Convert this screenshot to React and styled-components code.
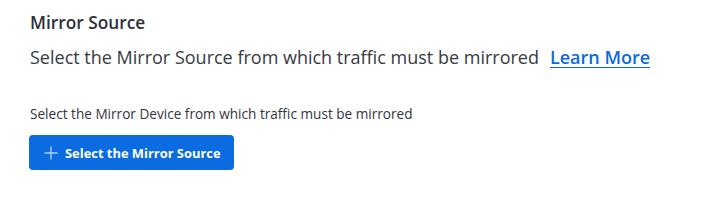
import React from "react";
import styled, { createGlobalStyle } from "styled-components";

const GlobalStyle = createGlobalStyle`
  body {
    margin: 0;
    background: #ffffff;
    font-family: "Open Sans", Lato, sans-serif;
  }
`;

const Section = styled.section`
  padding: 12px 30px 0;
`;

const Title = styled.h2`
  margin: 0;
  font-size: 17.3px;
  font-weight: 600;
  line-height: 22px;
  color: #2c2f38;
`;

const Lead = styled.p`
  margin: 11px 0 0;
  font-size: 18px;
  line-height: 24px;
  color: #373a42;
  display: flex;
  gap: 11px;
  align-items: baseline;
`;

const Link = styled.a`
  color: #0b6be0;
  font-weight: 600;
  text-decoration: underline;
  text-underline-offset: 3px;
  cursor: pointer;
`;

const Hint = styled.p`
  margin: 36px 0 0;
  font-size: 13.6px;
  line-height: 18px;
  color: #33363d;
`;

const Button = styled.button`
  margin-top: 12px;
  margin-left: -1px;
  display: flex;
  align-items: center;
  gap: 7px;
  height: 35px;
  padding: 0 13px 0 15px;
  border: none;
  border-radius: 4px;
  background: #0b6be0;
  color: #ffffff;
  font-family: inherit;
  font-size: 12.9px;
  font-weight: 700;
  cursor: pointer;
`;

const Plus = () => (
  <svg width="14" height="14" viewBox="0 0 14 14">
    <path d="M7 0.5v13M0.5 7h13" stroke="rgba(255,255,255,0.7)" strokeWidth="1.3" />
  </svg>
);

const App = () => (
  <>
    <GlobalStyle />
    <Section>
      <Title>Mirror Source</Title>
      <Lead>
        <span>Select the Mirror Source from which traffic must be mirrored</span>
        <Link>Learn More</Link>
      </Lead>
      <Hint>Select the Mirror Device from which traffic must be mirrored</Hint>
      <Button>
        <Plus />
        Select the Mirror Source
      </Button>
    </Section>
  </>
);

export default App;
